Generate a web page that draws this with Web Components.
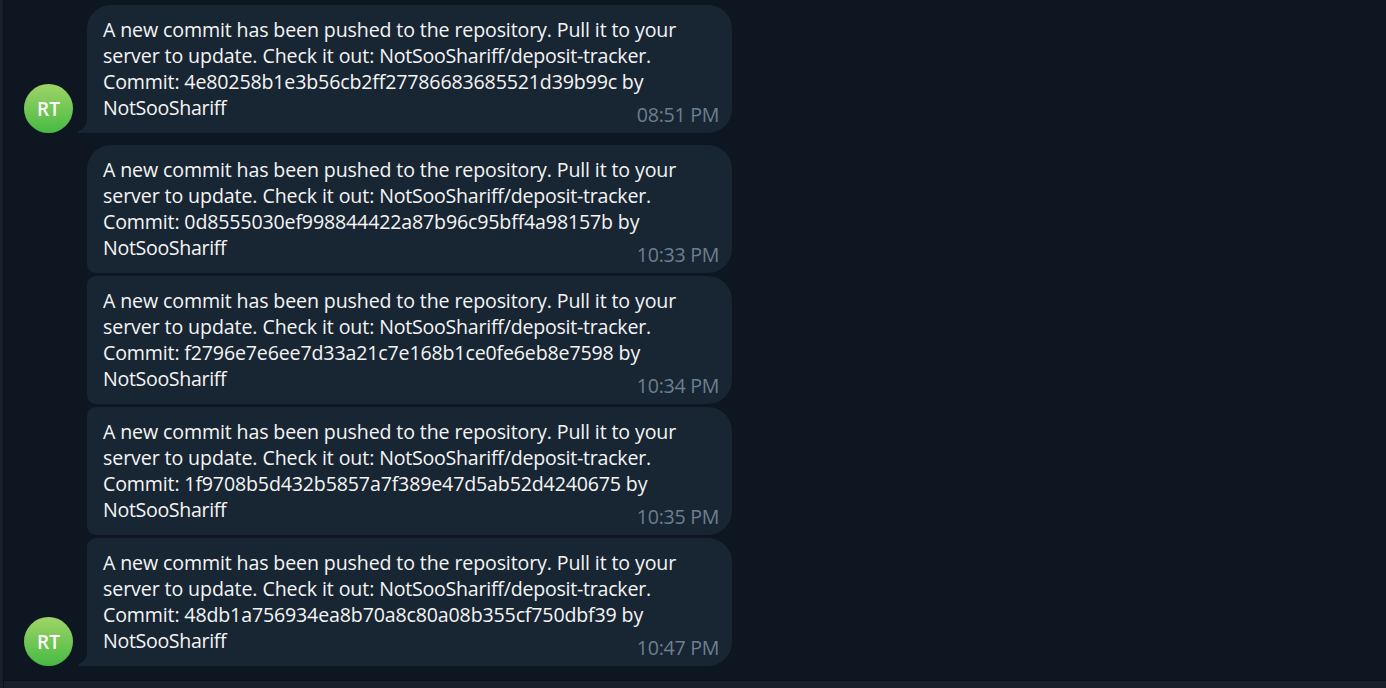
<!DOCTYPE html>
<html lang="en">
<head>
<meta charset="utf-8">
<title>Chat</title>
<style>
html, body { margin: 0; height: 100%; overflow: hidden; background: #0e1621; }
body { font-family: "Open Sans", "Noto Sans", sans-serif; }
</style>
</head>
<body>
<chat-window>
  <message-group>
    <chat-message first last time="08:51 PM" commit="4e80258b1e3b56cb2ff27786683685521d39b99c"></chat-message>
  </message-group>
  <message-group>
    <chat-message first time="10:33 PM" commit="0d8555030ef998844422a87b96c95bff4a98157b"></chat-message>
    <chat-message time="10:34 PM" commit="f2796e7e6ee7d33a21c7e168b1ce0fe6eb8e7598"></chat-message>
    <chat-message time="10:35 PM" commit="1f9708b5d432b5857a7f389e47d5ab52d4240675"></chat-message>
    <chat-message last time="10:47 PM" commit="48db1a756934ea8b70a8c80a08b355cf750dbf39"></chat-message>
  </message-group>
</chat-window>
<script>
class ChatWindow extends HTMLElement {
  constructor() {
    super();
    this.attachShadow({ mode: 'open' }).innerHTML = `
      <style>
        :host { display: grid; grid-template-columns: 3px 1fr; grid-template-rows: 680px 8px; height: 688px; box-sizing: border-box; background: #0e1621; }
        .side { grid-row: 1 / 3; background: #17212b; border-right: 1px solid #0b121a; box-sizing: border-box; width: 4px; }
        main { display: flex; flex-direction: column; gap: 12px; padding: 5px 0 0 21px; box-sizing: border-box; }
        footer { background: #17212b; border-top: 1px solid #0a121b; margin-left: 1px; }
      </style>
      <div class="side"></div>
      <main><slot></slot></main>
      <footer></footer>`;
  }
}
class MessageGroup extends HTMLElement {
  constructor() {
    super();
    this.attachShadow({ mode: 'open' }).innerHTML = `
      <style>
        :host { display: flex; align-items: flex-end; gap: 14px; }
        .list { display: flex; flex-direction: column; gap: 3px; }
      </style>
      <user-avatar>RT</user-avatar>
      <div class="list"><slot></slot></div>`;
  }
}
class UserAvatar extends HTMLElement {
  constructor() {
    super();
    this.attachShadow({ mode: 'open' }).innerHTML = `
      <style>
        :host { display: flex; align-items: center; justify-content: center; flex: none; width: 49px; height: 49px; border-radius: 50%;
          background: linear-gradient(#9fd467, #46ba43); color: #fff; font-size: 19px; font-weight: 600; line-height: 26px; }
      </style>
      <slot></slot>`;
  }
}
class ChatMessage extends HTMLElement {
  connectedCallback() {
    const first = this.hasAttribute('first'), last = this.hasAttribute('last');
    this.attachShadow({ mode: 'open' }).innerHTML = `
      <style>
        :host { display: block; position: relative; box-sizing: border-box; width: 645px; height: 128px; padding: 12px 13px 12px 16px;
          background: #182533; color: #f5f5f5; font-size: 19.6px; line-height: 26px; white-space: nowrap;
          border-radius: ${first ? 24 : 9}px 24px 24px ${last ? 0 : 9}px; }
        p { margin: 0; }
        .intro { letter-spacing: -.13px; }
        .check { letter-spacing: -.1px; }
        .repo { letter-spacing: -.24px; }
        .hash { letter-spacing: -.155px; }
        .author { letter-spacing: -.33px; }
        time { position: absolute; right: 13px; bottom: 5px; color: #6d7f8f; letter-spacing: -.29px; }
        svg { position: absolute; left: -9px; bottom: 0; display: block; }
      </style>
      ${last ? '<svg width="9" height="14" viewBox="0 0 9 14"><path d="M9 0C9 6 5.5 10 .6 12.2Q-.7 14 1 14H9Z" fill="#182533"/></svg>' : ''}
      <p class="intro">A new commit has been pushed to the repository. Pull it to your</p>
      <p class="check">server to update. Check it out: <span class="repo">NotSooShariff/deposit-tracker.</span></p>
      <p class="hash">Commit: ${this.getAttribute('commit')} by</p>
      <p class="author">NotSooShariff</p>
      <time>${this.getAttribute('time')}</time>`;
  }
}
customElements.define('chat-window', ChatWindow);
customElements.define('message-group', MessageGroup);
customElements.define('user-avatar', UserAvatar);
customElements.define('chat-message', ChatMessage);
</script>
</body>
</html>
